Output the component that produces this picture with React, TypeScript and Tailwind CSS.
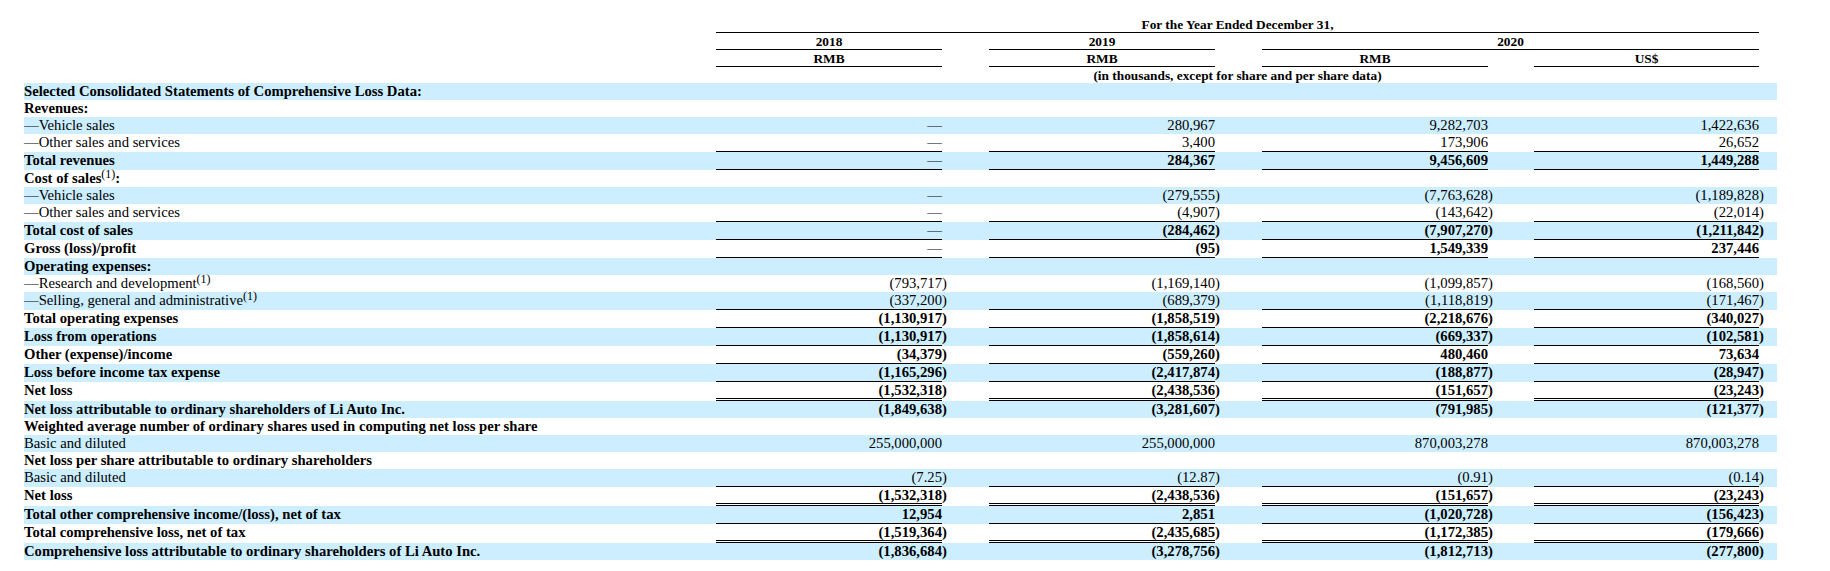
import React from "react"

type Line = "none" | "single" | "double"

interface Row {
  label: React.ReactNode
  bold?: boolean
  vals?: string[]
  line?: Line
}

const Sup = () => <sup className="font-normal text-[12px] top-[-0.45em]">(1)</sup>

const rows: Row[] = [
  { label: "Selected Consolidated Statements of Comprehensive Loss Data:", bold: true },
  { label: "Revenues:", bold: true },
  { label: "—Vehicle sales", vals: ["—", "280,967", "9,282,703", "1,422,636"] },
  { label: "—Other sales and services", vals: ["—", "3,400", "173,906", "26,652"], line: "single" },
  { label: "Total revenues", bold: true, vals: ["—", "284,367", "9,456,609", "1,449,288"], line: "single" },
  { label: <>Cost of sales<Sup />:</>, bold: true },
  { label: "—Vehicle sales", vals: ["—", "(279,555)", "(7,763,628)", "(1,189,828)"] },
  { label: "—Other sales and services", vals: ["—", "(4,907)", "(143,642)", "(22,014)"], line: "single" },
  { label: "Total cost of sales", bold: true, vals: ["—", "(284,462)", "(7,907,270)", "(1,211,842)"], line: "single" },
  { label: "Gross (loss)/profit", bold: true, vals: ["—", "(95)", "1,549,339", "237,446"], line: "single" },
  { label: "Operating expenses:", bold: true },
  { label: <>—Research and development<Sup /></>, vals: ["(793,717)", "(1,169,140)", "(1,099,857)", "(168,560)"] },
  { label: <>—Selling, general and administrative<Sup /></>, vals: ["(337,200)", "(689,379)", "(1,118,819)", "(171,467)"], line: "single" },
  { label: "Total operating expenses", bold: true, vals: ["(1,130,917)", "(1,858,519)", "(2,218,676)", "(340,027)"], line: "single" },
  { label: "Loss from operations", bold: true, vals: ["(1,130,917)", "(1,858,614)", "(669,337)", "(102,581)"], line: "single" },
  { label: "Other (expense)/income", bold: true, vals: ["(34,379)", "(559,260)", "480,460", "73,634"], line: "single" },
  { label: "Loss before income tax expense", bold: true, vals: ["(1,165,296)", "(2,417,874)", "(188,877)", "(28,947)"], line: "single" },
  { label: "Net loss", bold: true, vals: ["(1,532,318)", "(2,438,536)", "(151,657)", "(23,243)"], line: "double" },
  { label: "Net loss attributable to ordinary shareholders of Li Auto Inc.", bold: true, vals: ["(1,849,638)", "(3,281,607)", "(791,985)", "(121,377)"] },
  { label: "Weighted average number of ordinary shares used in computing net loss per share", bold: true },
  { label: "Basic and diluted", vals: ["255,000,000", "255,000,000", "870,003,278", "870,003,278"] },
  { label: "Net loss per share attributable to ordinary shareholders", bold: true },
  { label: "Basic and diluted", vals: ["(7.25)", "(12.87)", "(0.91)", "(0.14)"], line: "single" },
  { label: "Net loss", bold: true, vals: ["(1,532,318)", "(2,438,536)", "(151,657)", "(23,243)"], line: "double" },
  { label: "Total other comprehensive income/(loss), net of tax", bold: true, vals: ["12,954", "2,851", "(1,020,728)", "(156,423)"], line: "single" },
  { label: "Total comprehensive loss, net of tax", bold: true, vals: ["(1,519,364)", "(2,435,685)", "(1,172,385)", "(179,666)"], line: "double" },
  { label: "Comprehensive loss attributable to ordinary shareholders of Li Auto Inc.", bold: true, vals: ["(1,836,684)", "(3,278,756)", "(1,812,713)", "(277,800)"] },
]

const colWidths = ["w-[226px]", "w-[226px]", "w-[226px]", "w-[225px]"]
const gapWidths = ["w-[47px]", "w-[47px]", "w-[46px]", "w-[18px]"]

function rowHeight(line?: Line) {
  if (line === "single") return "h-[18px]"
  if (line === "double") return "h-[19px]"
  return "h-[17px]"
}

function lineClass(line?: Line) {
  if (line === "single") return "border-b border-black"
  if (line === "double") return "border-b-[3px] border-double border-black"
  return ""
}

// splits "(1,234)" into "(1,234" + hanging ")" so figures line up
function splitValue(v: string, bold?: boolean) {
  const neg = v.startsWith("(")
  const dash = v === "—"
  return {
    neg,
    text: neg ? v.slice(0, -1) : v,
    weight: bold && !dash ? "font-bold" : "font-normal",
  }
}

export default function App() {
  return (
    <div className="bg-white min-h-screen pt-[16px] pl-[24px] text-black font-['Liberation_Serif','Times_New_Roman',serif]">
      {/* header */}
      <div className="text-[13.33px] font-bold leading-[17px]">
        <div className="flex h-[17px]">
          <div className="w-[692px]" />
          <div className="w-[1043px] border-b border-black text-center">For the Year Ended December 31,</div>
        </div>
        <div className="flex h-[17px]">
          <div className="w-[692px]" />
          <div className="w-[226px] border-b border-black text-center">2018</div>
          <div className="w-[47px]" />
          <div className="w-[226px] border-b border-black text-center">2019</div>
          <div className="w-[47px]" />
          <div className="w-[497px] border-b border-black text-center">2020</div>
        </div>
        <div className="flex h-[17px]">
          <div className="w-[692px]" />
          <div className="w-[226px] border-b border-black text-center">RMB</div>
          <div className="w-[47px]" />
          <div className="w-[226px] border-b border-black text-center">RMB</div>
          <div className="w-[47px]" />
          <div className="w-[226px] border-b border-black text-center">RMB</div>
          <div className="w-[46px]" />
          <div className="w-[225px] border-b border-black text-center">US$</div>
        </div>
        <div className="flex h-[16px]">
          <div className="w-[692px]" />
          <div className="w-[1043px] text-center">(in thousands, except for share and per share data)</div>
        </div>
      </div>

      {/* body */}
      <div className="w-[1753px] text-[14.67px] leading-[17px]">
        {rows.map((row, i) => (
          <div
            key={i}
            className={`flex ${rowHeight(row.line)} ${i % 2 === 0 ? "bg-[#cceeff]" : ""}`}
          >
            <div className={`w-[692px] whitespace-nowrap ${row.bold ? "font-bold" : "font-normal"}`}>
              {row.label}
            </div>
            {[0, 1, 2, 3].map((c) => {
              const v = row.vals ? row.vals[c] : ""
              const info = splitValue(v, row.bold)
              return (
                <React.Fragment key={c}>
                  <div
                    className={`${colWidths[c]} text-right whitespace-nowrap ${info.weight} ${row.vals ? lineClass(row.line) : ""}`}
                  >
                    {info.text}
                  </div>
                  <div className={`${gapWidths[c]} text-left ${info.weight}`}>{info.neg ? ")" : ""}</div>
                </React.Fragment>
              )
            })}
          </div>
        ))}
      </div>
    </div>
  )
}
